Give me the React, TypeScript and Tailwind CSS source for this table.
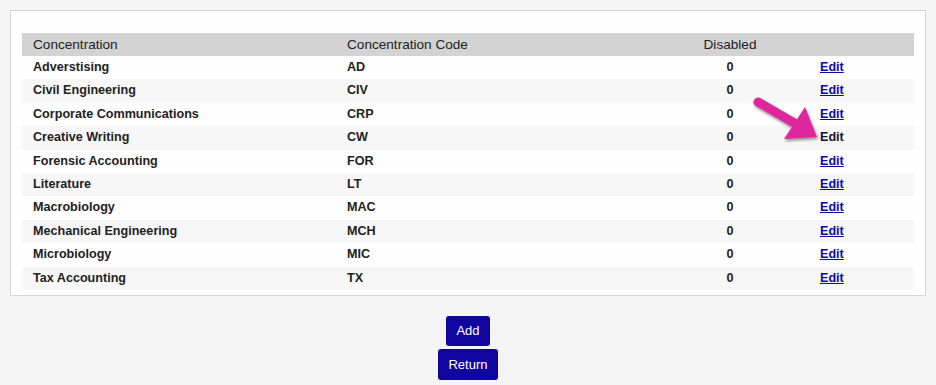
const rows = [
  ["Adverstising", "AD"],
  ["Civil Engineering", "CIV"],
  ["Corporate Communications", "CRP"],
  ["Creative Writing", "CW"],
  ["Forensic Accounting", "FOR"],
  ["Literature", "LT"],
  ["Macrobiology", "MAC"],
  ["Mechanical Engineering", "MCH"],
  ["Microbiology", "MIC"],
  ["Tax Accounting", "TX"],
];

function Arrow() {
  return (
    <svg
      className="absolute left-[748px] top-[94px] pointer-events-none"
      width="80"
      height="56"
      viewBox="0 0 80 56"
    >
      <defs>
        <filter id="sh" x="-20%" y="-20%" width="150%" height="150%">
          <feDropShadow dx="1" dy="2" stdDeviation="1.5" floodColor="#000" floodOpacity="0.45" />
        </filter>
      </defs>
      <g filter="url(#sh)">
        <line x1="10" y1="8" x2="48" y2="30" stroke="#e0279c" strokeWidth="9" strokeLinecap="round" />
        <polygon points="57,13 69,43 36,45" fill="#e0279c" />
      </g>
    </svg>
  );
}

export default function App() {
  return (
    <div className="relative min-h-[385px] bg-[#f5f5f5] pt-[10px] font-['Liberation_Sans',Arial,sans-serif] text-[13px] text-[#222]">
      <div className="mx-[10px] w-[916px] border border-[#d6d6d6] bg-[#fefefe] px-[11px] pt-[22px] pb-[5px]">
        <div className="grid grid-cols-[314px_315px_158px_105px]">
          <div className="h-[23px] bg-[#d3d3d3] pl-[11px] text-[13.6px] leading-[23px]">Concentration</div>
          <div className="h-[23px] bg-[#d3d3d3] pl-[11px] text-[13.6px] leading-[23px]">Concentration Code</div>
          <div className="h-[23px] bg-[#d3d3d3] text-center text-[13.6px] leading-[23px]">Disabled</div>
          <div className="h-[23px] bg-[#d3d3d3]"></div>
          {rows.map(([name, code], i) => {
            const bg = i % 2 === 0 ? "bg-[#fefefe]" : "bg-[#f7f7f7]";
            const hover = code === "CW";
            return [
              <div key={name + "a"} className={`h-[23.4px] ${bg} pl-[11px] text-[12.6px] font-bold leading-[23.4px]`}>{name}</div>,
              <div key={name + "b"} className={`h-[23.4px] ${bg} pl-[11px] text-[12.6px] font-bold leading-[23.4px]`}>{code}</div>,
              <div key={name + "c"} className={`h-[23.4px] ${bg} text-center text-[12.6px] font-bold leading-[23.4px]`}>0</div>,
              <div key={name + "d"} className={`h-[23.4px] ${bg} pl-[11px] text-[12.6px] leading-[23.4px]`}>
                <a
                  href="#"
                  className={hover ? "font-bold text-[#111133] no-underline" : "font-bold text-[#0a0aa8] underline"}
                >
                  Edit
                </a>
              </div>,
            ];
          })}
        </div>
      </div>
      <div className="mt-[20px] flex flex-col items-center gap-[3px]">
        <button className="h-[30px] w-[44px] rounded-[3px] bg-[#10069f] text-[13px] text-white">Add</button>
        <button className="h-[31px] w-[60px] rounded-[3px] bg-[#10069f] text-[13px] text-white">Return</button>
      </div>
      <Arrow />
    </div>
  );
}
